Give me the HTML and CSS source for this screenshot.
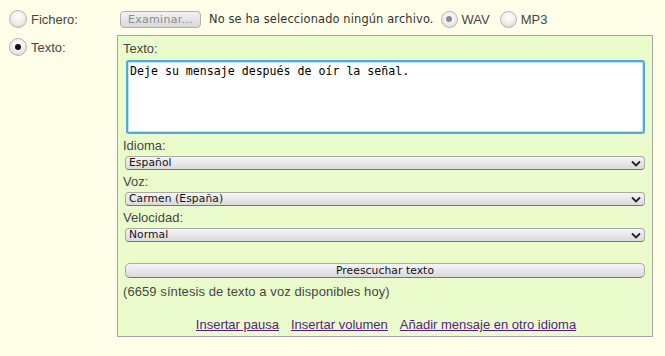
FILE: index.html
```html
<!DOCTYPE html>
<html lang="es">
<head>
    <meta charset="UTF-8">
    <title>Mensaje</title>
    <link rel="stylesheet" href="styles.css">
</head>
<body>

    <div class="page">
        <div class="top-row">
            <div class="choice">
                <span class="radio"></span>
                <span class="choice-label">Fichero:</span>
            </div>
            <button class="file-btn">Examinar...</button>
            <span class="file-name">No se ha seleccionado ningún archivo.</span>
            <span class="radio radio-small checked-gray"></span>
            <span class="format">WAV</span>
            <span class="radio radio-small"></span>
            <span class="format">MP3</span>
        </div>

        <div class="text-row">
            <div class="choice choice-text">
                <span class="radio checked"></span>
                <span class="choice-label">Texto:</span>
            </div>

            <div class="panel">
                <label class="field-label" for="texto">Texto:</label>
                <textarea id="texto" class="message">Deje su mensaje después de oír la señal.</textarea>

                <label class="field-label" for="idioma">Idioma:</label>
                <div class="select-wrap">
                    <select id="idioma"><option>Español</option></select>
                    <svg class="chevron" width="10" height="7" viewBox="0 0 10 7"><path d="M1 1.5 L5 5.5 L9 1.5" fill="none" stroke="#222" stroke-width="1.8"/></svg>
                </div>

                <label class="field-label" for="voz">Voz:</label>
                <div class="select-wrap">
                    <select id="voz"><option>Carmen (España)</option></select>
                    <svg class="chevron" width="10" height="7" viewBox="0 0 10 7"><path d="M1 1.5 L5 5.5 L9 1.5" fill="none" stroke="#222" stroke-width="1.8"/></svg>
                </div>

                <label class="field-label" for="velocidad">Velocidad:</label>
                <div class="select-wrap">
                    <select id="velocidad"><option>Normal</option></select>
                    <svg class="chevron" width="10" height="7" viewBox="0 0 10 7"><path d="M1 1.5 L5 5.5 L9 1.5" fill="none" stroke="#222" stroke-width="1.8"/></svg>
                </div>

                <button class="preview-btn">Preescuchar texto</button>
                <p class="quota">(6659 síntesis de texto a voz disponibles hoy)</p>

                <div class="links">
                    <a href="#">Insertar pausa</a>
                    <a href="#">Insertar volumen</a>
                    <a href="#">Añadir mensaje en otro idioma</a>
                </div>
            </div>
        </div>
    </div>

</body>
</html>
```

FILE: styles.css
```css
body {
    margin: 0;
    background-color: #fefee9;
    font-family: 'Liberation Sans', Arial, sans-serif;
    font-size: 13px;
    color: #464646;
}

.page {
    padding: 5px 12px 0 9px;
}

.top-row {
    display: flex;
    align-items: center;
    height: 28px;
}

.choice {
    display: flex;
    align-items: center;
    width: 108px;
    flex-shrink: 0;
}

.choice-label {
    margin-left: 4px;
}

.radio {
    display: inline-block;
    box-sizing: border-box;
    width: 18px;
    height: 18px;
    border-radius: 50%;
    border: 1px solid #b4b4b4;
    background: radial-gradient(circle at 50% 35%, #ffffff 0%, #ececec 55%, #cfcfcf 100%);
    position: relative;
    flex-shrink: 0;
}

.radio-small {
    width: 17px;
    height: 17px;
}

.checked::after,
.checked-gray::after {
    content: "";
    position: absolute;
    left: 50%;
    top: 50%;
    width: 6px;
    height: 6px;
    margin: -3px 0 0 -3px;
    border-radius: 50%;
    background-color: #111;
}

.checked-gray::after {
    background-color: #8a8a8a;
}

.file-btn {
    box-sizing: border-box;
    width: 81px;
    height: 17px;
    margin-left: 3px;
    padding: 0;
    border: 1px solid #b0b0b0;
    border-radius: 4px;
    background: linear-gradient(#f2f2f2, #d8d8d8);
    color: #8c8c8c;
    font-family: 'DejaVu Sans', sans-serif;
    font-size: 11px;
    letter-spacing: 0.3px;
}

.file-name {
    margin-left: 8px;
    margin-right: 7px;
    font-family: 'DejaVu Sans', sans-serif;
    font-size: 11.4px;
    letter-spacing: 0.14px;
    color: #333;
}

.format {
    margin-left: 4px;
    margin-right: 10px;
}

.text-row {
    display: flex;
    align-items: flex-start;
    margin-top: 2px;
}

.choice-text {
    padding-top: 3px;
}

.panel {
    box-sizing: border-box;
    width: 536px;
    background-color: #ebfccc;
    border: 1px solid #a6a6a6;
    padding: 5px 7px 3px 5px;
    display: flex;
    flex-direction: column;
}

.field-label {
    display: block;
    line-height: 16px;
    margin: 4px 0 2px;
}

.panel .field-label:first-child {
    margin: 0;
}

.message {
    box-sizing: border-box;
    height: 74px;
    margin: 3px 0 0 3px;
    padding: 2px 2px;
    border: 2px solid #4fa9e0;
    border-radius: 3px;
    box-shadow: inset 0 0 0 1px #c4e2f5;
    background-color: #fff;
    font-family: 'DejaVu Sans Mono', monospace;
    font-size: 11.6px;
    line-height: 14px;
    color: #000;
    resize: none;
    outline: none;
}

.select-wrap {
    position: relative;
    margin-left: 2px;
}

.select-wrap select {
    appearance: none;
    -webkit-appearance: none;
    display: block;
    box-sizing: border-box;
    width: 100%;
    height: 14px;
    margin: 0;
    padding: 0 0 0 3px;
    border: 1px solid #a8a8a8;
    border-bottom-color: #777;
    border-radius: 4px;
    background: linear-gradient(#f6f6f6, #dadada);
    font-family: 'DejaVu Sans', sans-serif;
    font-size: 10.7px;
    line-height: 12px;
    letter-spacing: 0.1px;
    color: #111;
}

.chevron {
    position: absolute;
    right: 4px;
    top: 4px;
}

.preview-btn {
    box-sizing: border-box;
    height: 15px;
    margin: 21px 0 0 2px;
    padding: 0;
    border: 1px solid #a8a8a8;
    border-bottom-color: #777;
    border-radius: 5px;
    background: linear-gradient(#f6f6f6, #dadada);
    font-family: 'DejaVu Sans', sans-serif;
    font-size: 10.7px;
    line-height: 12px;
    letter-spacing: 0.1px;
    color: #111;
}

.quota {
    margin: 6px 0 0 0;
    line-height: 16px;
    letter-spacing: 0.08px;
}

.links {
    display: flex;
    justify-content: center;
    gap: 12px;
    margin-top: 17px;
    padding-left: 4px;
    line-height: 16px;
}

.links a {
    color: #551a8b;
}
```
